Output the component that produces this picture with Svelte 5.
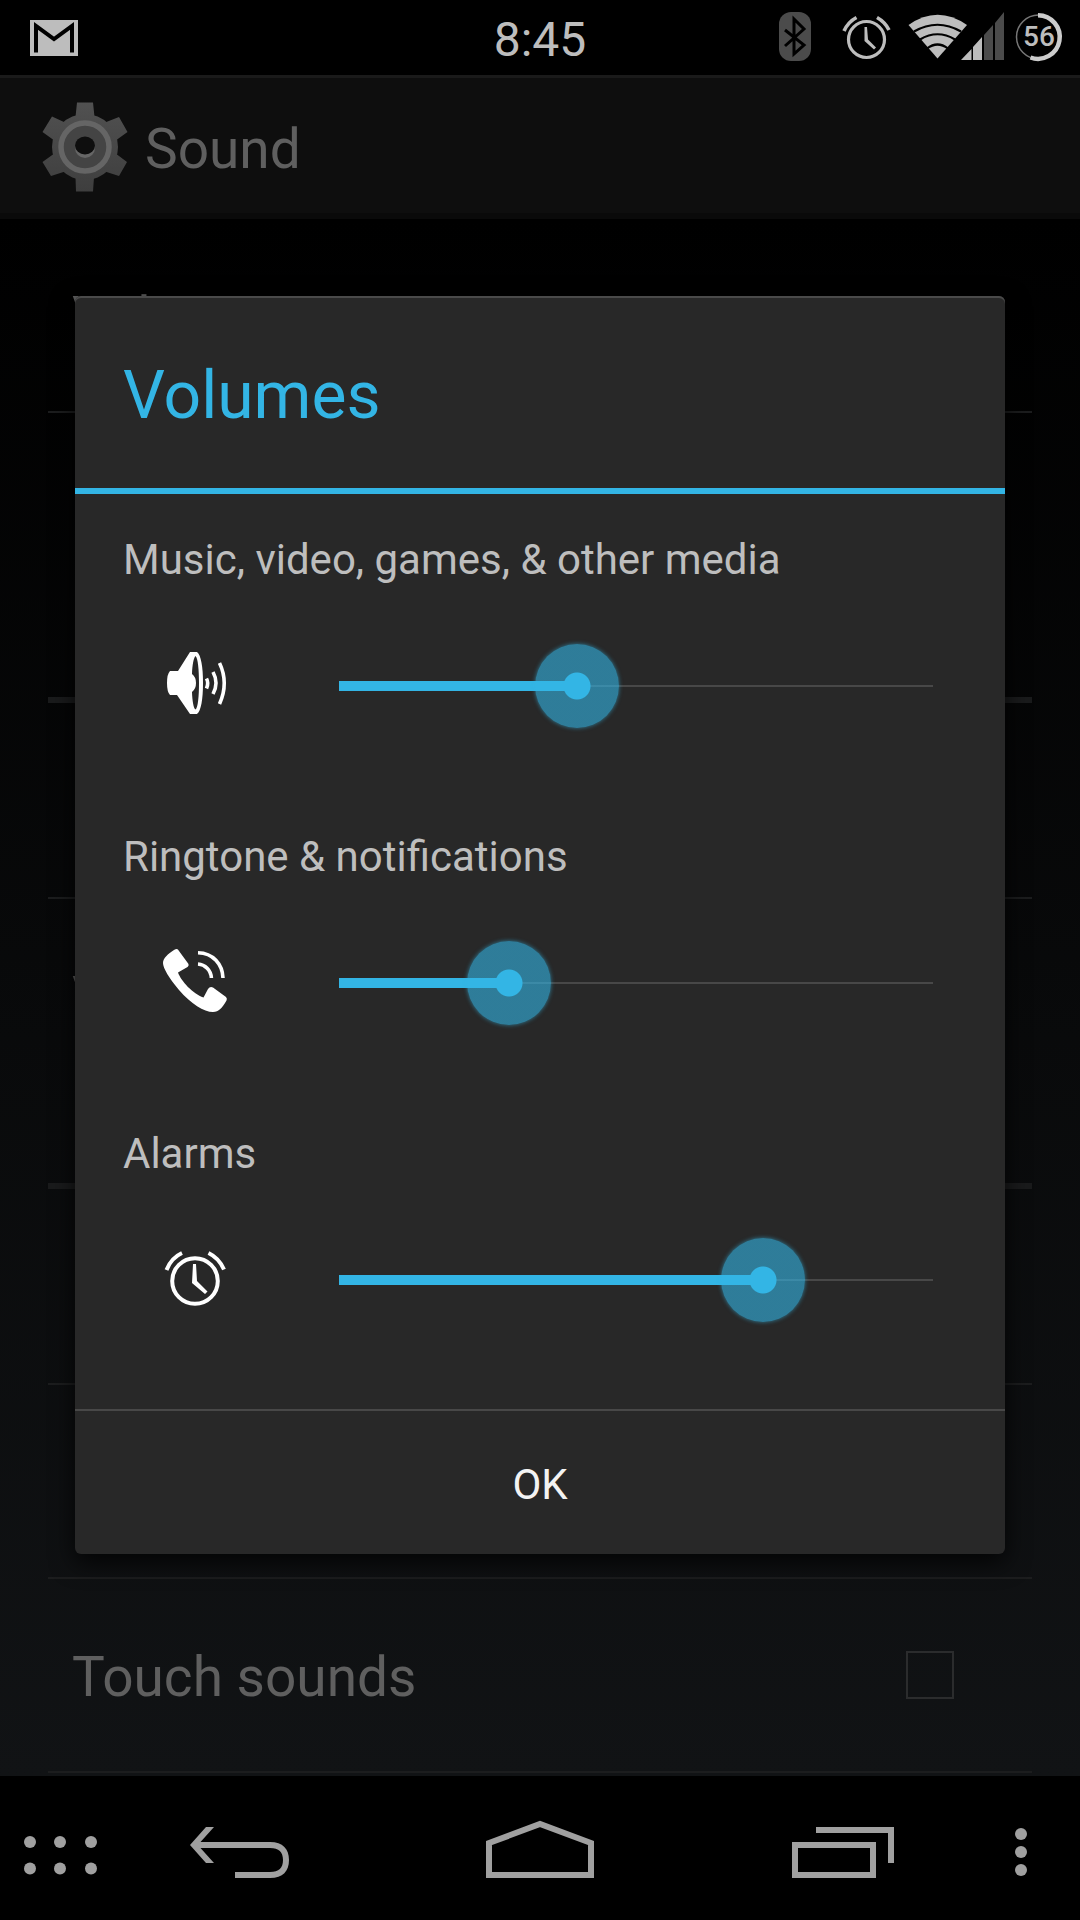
<script>
  // Sound settings screen with the volumes dialog open

  const batteryLevel = 56;

  // rows of the settings list, type "header" draws a category title
  const settings = [
    { type: "row", name: "Volumes" },
    { type: "row" },
    { type: "header" },
    { type: "row" },
    { type: "row", name: "Vibrate when ringing" },
    { type: "header" },
    { type: "row" },
    { type: "row" },
    { type: "row", name: "Touch sounds", checkbox: true }
  ];

  let touchSounds = $state(false);
  let dialogOpen = $state(true);

  let volumes = $state([
    { id: "media", label: "Music, video, games, & other media", value: 6, max: 15 },
    { id: "ring", label: "Ringtone & notifications", value: 2, max: 7 },
    { id: "alarm", label: "Alarms", value: 5, max: 7 }
  ]);

  function closeDialog() {
    dialogOpen = false;
  }
</script>

<div class="screen">
  <header class="status-bar">
    <div class="status-left">
      <svg width="48" height="36" viewBox="0 0 48 36" aria-hidden="true">
        <rect width="48" height="36" fill="#bdbdbd" />
        <path d="M6 32.500V6L24 19L42 6V32.500" fill="none" stroke="#000" stroke-width="4" />
      </svg>
    </div>
    <time class="clock">8:45</time>
    <div class="status-right">
      <!-- Bluetooth -->
      <svg width="54" height="75" viewBox="772 0 54 75" aria-hidden="true">
        <rect x="779" y="12" width="32" height="49" rx="12" fill="#4b4b4b" />
        <path d="M785 30L804 45L794 54V19L804 29L785 46" fill="none" stroke="#000" stroke-width="3" />
      </svg>
      <!-- Alarm -->
      <svg width="66" height="75" viewBox="834 0 66 75" aria-hidden="true">
        <g fill="none" stroke="#bdbdbd">
          <circle cx="866.500" cy="39.500" r="18" stroke-width="3.200" />
          <path d="M844 31Q848 22 856.500 17.500M889 30Q885 22 877 17.500" stroke-width="3.600" />
        </g>
        <path d="M864.500 27h2.500l1 12.500l8 8l-2 2l-9.500-8.500z" fill="#bdbdbd" />
      </svg>
      <!-- Wifi and signal -->
      <svg width="98" height="75" viewBox="908 0 98 75" aria-hidden="true">
        <path d="M937.500 58.500L908.500 25Q937.500 4.500 967 25z" fill="#bdbdbd" />
        <g fill="none" stroke="#000" stroke-width="2.200">
          <path d="M914 31.500Q937.500 18 961 31.500" />
          <path d="M920 39.500Q937.500 29 955 39.500" />
          <path d="M927 48.500Q937.500 40.500 948 48.500" />
        </g>
        <path d="M961 60L971.500 49V60zM973 60V47L982 37V60z" fill="#bdbdbd" />
        <path d="M984 60V35L993 25V60zM995 60V23L1004 12V60z" fill="#4b4b4b" />
      </svg>
      <!-- Battery -->
      <svg width="50" height="75" viewBox="1014 0 50 75" role="img" aria-label="Battery">
        <circle cx="1038.500" cy="37" r="22" fill="none" stroke="#777" stroke-width="1.500" />
        <path d="M1038 15.200A21.800 21.800 0 1 1 1030.500 57.500" fill="none" stroke="#ccc" stroke-width="4.500" />
        <text x="1039" y="46" text-anchor="middle" class="battery-text">{batteryLevel}</text>
      </svg>
    </div>
  </header>

  <div class="action-bar">
    <svg width="86" height="90" viewBox="-43 -45 86 90" aria-hidden="true">
      <defs>
        <linearGradient id="gear" gradientUnits="userSpaceOnUse" x1="0" y1="-45" x2="0" y2="45">
          <stop offset="0" stop-color="#515151" />
          <stop offset="1" stop-color="#3e3e3e" />
        </linearGradient>
      </defs>
      <g fill="url(#gear)">
        <circle r="33" />
        <path d="M-9.500-30L-8-44.500H8L9.500-30zM-9.500 30L-9 44.500H8L9 30z" />
        <path d="M20-24.500L34-30L42.500-15L30-6zM-20-24.500L-33-30.500L-42.500-15L-30-6z" />
        <path d="M20 24.500L34 29L42 15L30 6zM-20 24.500L-34 29L-42.500 15L-30 6z" />
      </g>
      <circle r="24" fill="#444" stroke="#656565" stroke-width="5.500" />
      <circle cy="1" r="10" fill="#666" />
      <ellipse cy="-1.500" rx="10" ry="9" fill="#0e0e0e" />
    </svg>
    <h1>Sound</h1>
  </div>

  <main class="settings">
    {#each settings as item}
      {#if item.type === "header"}
        <div class="category"></div>
      {:else if item.checkbox}
        <div class="row">
          <label class="row-name" for="touch-sounds">{item.name}</label>
          <input id="touch-sounds" class="check" type="checkbox" bind:checked={touchSounds} />
        </div>
      {:else}
        <div class="row"><span class="row-name">{item.name ?? ""}</span></div>
      {/if}
    {/each}
  </main>

  <nav class="nav-bar">
    <button class="nav-btn apps" aria-label="Apps">
      <svg width="80" height="144" viewBox="20 0 80 144">
        {#each [30, 60, 91] as x}
          <circle cx={x} cy="66" r="6" />
          <circle cx={x} cy="92.500" r="6" />
        {/each}
      </svg>
    </button>
    <button class="nav-btn" aria-label="Back">
      <svg width="108" height="144" viewBox="0 0 108 144">
        <path d="M4 69L20 51H28L14.500 66H84C97 66 103 73 103 84S97 102 84 102H49V96H84C93 96 97 92 97 84S93 72 84 72H14.500L28 87H20z" />
      </svg>
    </button>
    <button class="nav-btn" aria-label="Home">
      <svg width="108" height="144" viewBox="0 0 108 144">
        <path class="line" d="M3 99V67L54 48L105 67V99z" />
      </svg>
    </button>
    <button class="nav-btn" aria-label="Recent apps">
      <svg width="108" height="144" viewBox="0 0 108 144">
        <path class="line" d="M9 69H87V99H9zM30 54H105V87" />
      </svg>
    </button>
    <button class="nav-btn more" aria-label="More options">
      <svg width="12" height="144" viewBox="0 0 12 144">
        {#each [58, 76, 94] as y}
          <circle cx="6" cy={y} r="6" />
        {/each}
      </svg>
    </button>
  </nav>

  {#if dialogOpen}
    <div class="overlay">
      <section class="dialog" role="dialog" aria-labelledby="dialog-title">
        <h2 id="dialog-title" class="dialog-title">Volumes</h2>

        <div class="dialog-body">
          {#each volumes as volume}
            <div class="volume">
              <label for={volume.id}>{volume.label}</label>
              <div class="volume-control">
                <svg width="72" height="72" viewBox="0 0 72 72" aria-hidden="true">
                  {#if volume.id === "media"}
                    <path fill="#fff" fill-rule="evenodd" d="M11 21H19L31 2H38C42 5 44 17 44 33S42 61 38 64H31L18 45H11Q8 42 8 33T11 21zM36.500 6C34.500 8 33.300 15 33 24Q37 27 37 33T33 42C33.300 51 34.500 58 36.500 59.500C39 58 40 46 40 33S39 8 36.500 6z" />
                    <path fill="none" stroke="#fff" stroke-width="3.600" d="M47.500 28.500Q50 33 47.500 38.500M54 22Q60 33 54 44M60.500 13Q70 33 60.500 54" />
                  {:else if volume.id === "ring"}
                    <path fill="#fff" d="M17.800 2Q19 2 20 4L29.500 17Q30 19 28.500 20L19 25.500C22 34 34 47 44.500 50.500L49 42Q51 39 54 40.500L67 50Q68.500 51.500 67.500 53.500C63 61 60 65 54 65C45 65 32 57 20 43C10 31 4 21 4 16C4 11 9 7 15 3Q16.500 2 17.800 2z" />
                    <path fill="none" stroke="#fff" stroke-width="3.600" d="M39 5.700C54 6 63.500 17 64 31M39 17C46 17.500 52 23 52.400 31" />
                  {:else}
                    <circle cx="36" cy="37" r="22.800" fill="none" stroke="#fff" stroke-width="4" />
                    <path fill="none" stroke="#fff" stroke-width="4" d="M7.500 26Q12 14 23 9M65 25.500Q60 14 49.500 9" />
                    <path fill="#fff" d="M34 20h3l1 17l10.500 10.500l-2.500 2.500l-13-11z" />
                  {/if}
                </svg>
                <input
                  id={volume.id}
                  class="slider"
                  type="range"
                  min="0"
                  max={volume.max}
                  bind:value={volume.value}
                  style="--level: {volume.value / volume.max}"
                />
              </div>
            </div>
          {/each}
        </div>

        <button class="ok-btn" onclick={closeDialog}>OK</button>
      </section>
    </div>
  {/if}
</div>

<style>
  :global(body) {
    margin: 0;
    background: #000;
  }

  .screen {
    position: relative;
    min-height: 100vh;
    display: flex;
    flex-direction: column;
    background: #000;
    font-family: Roboto, "Liberation Sans", sans-serif;
  }

  svg {
    display: block;
    flex: none;
  }

  /* === STATUS BAR === */
  .status-bar {
    height: 75px;
    display: grid;
    grid-template-columns: 1fr auto 1fr;
    align-items: center;
  }

  .status-left {
    padding-left: 30px;
  }

  .clock {
    padding-top: 4px;
    font-size: 48px;
    line-height: 56px;
    color: #bdbdbd;
  }

  .status-right {
    display: flex;
    justify-content: flex-end;
    gap: 8px;
    padding-right: 16px;
  }

  .battery-text {
    font-size: 28px;
    font-weight: 500;
    fill: #bdbdbd;
  }

  /* === ACTION BAR === */
  .action-bar {
    box-sizing: border-box;
    height: 144px;
    display: flex;
    align-items: center;
    gap: 17px;
    padding: 2px 0 0 42px;
    background: #0e0e0e;
    border-top: 3px solid #1a1a1a;
    border-bottom: 6px solid #0a0a0a;
  }

  .action-bar h1 {
    margin: 0;
    padding-top: 4px;
    font-size: 55px;
    line-height: 64px;
    font-weight: 400;
    color: #5f5f5f;
  }

  /* === SETTINGS LIST === */
  .settings {
    flex: 1;
    padding: 0 48px;
    background: linear-gradient(#000, #111315);
  }

  .row {
    height: 192px;
    display: flex;
    align-items: center;
    justify-content: space-between;
    padding: 0 78px 0 24px;
    border-bottom: 2px solid #1c1d1e;
  }

  /* the category draws its own line */
  .row:has(+ .category) {
    border-bottom-color: transparent;
  }

  .row-name {
    padding-top: 4px;
    font-size: 55px;
    line-height: 64px;
    color: #5f5f5f;
  }

  .category {
    height: 90px;
    margin-bottom: 2px;
    border-bottom: 6px solid #1a1b1c;
  }

  .check {
    appearance: none;
    width: 48px;
    height: 48px;
    margin: 0;
    border: 2px solid #2b2c2d;
  }

  .check:checked {
    background: #1d6580;
  }

  /* === NAVIGATION BAR === */
  .nav-bar {
    height: 144px;
    display: grid;
    grid-template-columns: 90px 1fr 1fr 1fr 90px;
    background: #000;
  }

  .nav-btn {
    display: flex;
    justify-content: center;
    padding: 0;
    border: none;
    background: none;
    cursor: pointer;
  }

  .apps {
    justify-content: flex-start;
    padding-left: 20px;
  }

  .more {
    justify-content: flex-start;
    padding-left: 25px;
  }

  .nav-btn svg {
    fill: #a0a0a0;
  }

  .nav-btn .line {
    fill: none;
    stroke: #a0a0a0;
    stroke-width: 6;
  }

  /* === DIALOG === */
  .overlay {
    position: absolute;
    inset: 75px 0 145px;
    display: flex;
    align-items: center;
    padding: 0 75px;
  }

  .dialog {
    flex: 1;
    background: #282828;
    border-radius: 6px;
    box-shadow: 0 8px 24px rgba(0, 0, 0, 0.8), inset 0 2px 0 #4a4a4a;
  }

  .dialog-title {
    margin: 0;
    padding: 60px 48px 52px;
    border-bottom: 6px solid #33b5e5;
    font-size: 66px;
    line-height: 80px;
    font-weight: 400;
    color: #33b5e5;
  }

  .dialog-body {
    padding-bottom: 24px;
  }

  .volume {
    padding: 38px 30px 63px 48px;
  }

  .volume label {
    display: block;
    margin-bottom: 56px;
    font-size: 42px;
    line-height: 56px;
    color: #bebebe;
  }

  .volume-control {
    display: flex;
    align-items: center;
    gap: 66px;
    padding-left: 36px;
  }

  /* the groove is inset by half a thumb at both ends */
  .slider {
    appearance: none;
    flex: 1;
    min-width: 0;
    height: 84px;
    margin: 0;
    background:
      linear-gradient(#33b5e5, #33b5e5) 42px center / calc((100% - 84px) * var(--level)) 10px no-repeat,
      linear-gradient(#484848, #484848) 42px center / calc(100% - 84px) 2px no-repeat;
    cursor: pointer;
  }

  .slider::-webkit-slider-thumb {
    appearance: none;
    width: 84px;
    height: 84px;
    border-radius: 50%;
    background: radial-gradient(circle, #33b5e5 13px, rgba(51, 181, 229, 0.6) 14px);
    box-shadow: 0 0 4px rgba(51, 181, 229, 0.6);
  }

  .ok-btn {
    display: block;
    width: 100%;
    height: 145px;
    padding: 4px 0 0;
    border: none;
    border-top: 2px solid #484848;
    background: none;
    font-family: inherit;
    font-size: 42px;
    color: #f3f3f3;
    cursor: pointer;
  }
</style>
